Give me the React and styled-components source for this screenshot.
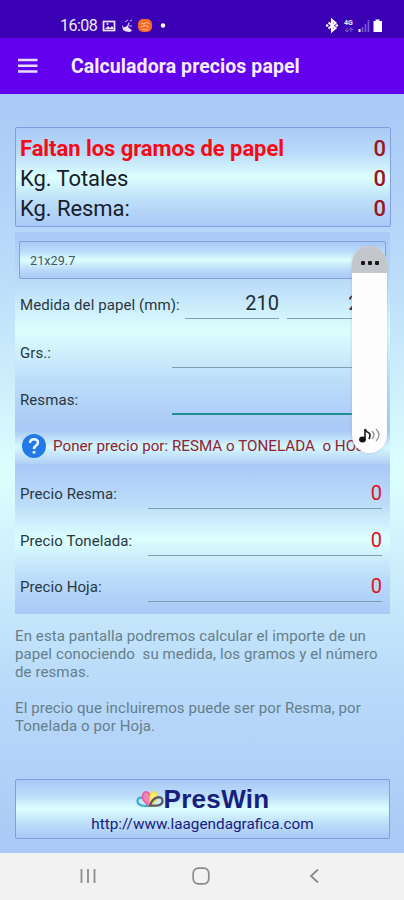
import React from "react";
import styled, { createGlobalStyle } from "styled-components";

const Global = createGlobalStyle`
  *, *::before, *::after { box-sizing: border-box; }
  body { margin: 0; font-family: Roboto, "Liberation Sans", sans-serif; }
`;
const band = "#a9c9f7 0%, #bbdcf9 26%, #dcfffe 50%, #bbdcf9 76%, #a9c9f7 100%";

const Screen = styled.div`
  position: relative;
  width: 404px;
  height: 900px;
  overflow: hidden;
  display: flex;
  flex-direction: column;
`;
const StatusBar = styled.header`
  height: 38px;
  flex: none;
  background: #3b00b3;
  color: #f1eafc;
  display: flex;
  align-items: center;
  padding: 13px 20px 0 60px;
`;
const Clock = styled.span`
  font-size: 16px;
  letter-spacing: -0.5px;
  line-height: 20px;
  width: 42px;
`;
const StatusIcons = styled.svg`
  flex: none;
  margin-left: ${(p) => p.$push || "0"};
`;
const AppBar = styled.div`
  height: 56px;
  flex: none;
  background: #6200ee;
  display: flex;
  align-items: center;
  padding-left: 18px;
  gap: 33px;
`;
const Title = styled.h1`
  margin: 0;
  color: #f5edff;
  font-size: 19.5px;
  font-weight: 700;
  letter-spacing: 0.08px;
  line-height: 26px;
  white-space: nowrap;
  padding-top: 2px;
`;
const Content = styled.main`
  height: 759px;
  flex: none;
  padding: 33px 13px 0 15px;
  background: linear-gradient(#a9c9f7 0%, #b9daf9 22%, #dcfffe 50%, #b9daf9 78%, #a9c9f7 100%);
`;
const Framed = styled.section`
  border: 1px solid #819fdb;
  border-radius: 2px;
  background: linear-gradient(${band});
`;
const Summary = styled(Framed)`
  height: 100px;
  padding: 6px 4px 0;
`;
const SummaryRow = styled.div`
  height: 30px;
  display: flex;
  justify-content: space-between;
  align-items: center;
  font-size: 22px;
  line-height: 30px;
  white-space: nowrap;
  color: ${(p) => (p.$alert ? "#f80a14" : "#17202a")};
  font-weight: ${(p) => (p.$alert ? 700 : 400)};
  letter-spacing: -0.06px;
`;
const Total = styled.span`
  color: #9d1520;
  font-weight: 500;
  letter-spacing: 0;
`;
const Panel = styled.section`
  width: 375px;
  background: linear-gradient(${band});
`;
const FormPanel = styled(Panel)`
  height: 198px;
  margin-top: 5px;
  padding: 9px 4px 0;
`;
const PricePanel = styled(Panel)`
  height: 150px;
  padding: 7px 9px 0 5px;
`;
const Select = styled(Framed)`
  height: 38px;
  padding-left: 10px;
  font-size: 12.6px;
  letter-spacing: 0.05px;
  line-height: 37px;
  color: #46565e;
`;
const Row = styled.div`
  height: ${(p) => p.$height || 47}px;
  display: flex;
  align-items: flex-end;
  padding-left: ${(p) => p.$indent || 0}px;
`;
const Label = styled.label`
  width: ${(p) => p.$width}px;
  flex: none;
  font-size: 15px;
  letter-spacing: 0.08px;
  line-height: 20px;
  color: #29373f;
  white-space: nowrap;
  padding-bottom: ${(p) => p.$lift || 5}px;
  box-sizing: content-box;
`;
const Field = styled.div`
  width: ${(p) => p.$width}px;
  height: 34px;
  flex: none;
  margin-right: ${(p) => p.$gap || 0}px;
  border-bottom: ${(p) => (p.$active ? "2px solid #218f91" : "1px solid #829fac")};
  font-size: 20px;
  line-height: 36px;
  text-align: right;
  color: ${(p) => (p.$price ? "#e2101b" : "#202c34")};
`;
const Help = styled.div`
  height: 34px;
  width: 375px;
  display: flex;
  align-items: center;
  padding: 0 0 2px 7px;
  gap: 7px;
  color: #8e2431;
  font-size: 15.2px;
  white-space: pre;
  background: linear-gradient(#a9c9f7, #d6f8fd 50%, #b1d0f7);
`;
const Notes = styled.div`
  margin-top: 13px;
  height: 108px;
  color: #657e8b;
  font-size: 15px;
  line-height: 18px;
  letter-spacing: 0.1px;
  white-space: pre;
`;
const Footer = styled(Framed)`
  width: 375px;
  height: 60px;
  margin-top: 44px;
  display: flex;
  flex-direction: column;
  align-items: center;
  color: #17217b;
`;
const Brand = styled.div`
  height: 34px;
  display: flex;
  align-items: center;
  font: 700 26px/34px "Liberation Sans", Arial, sans-serif;
  letter-spacing: 0.3px;
  padding-top: 4px;
`;
const Link = styled.span`
  font-size: 15.3px;
  line-height: 20px;
`;
const NavBar = styled.nav`
  height: 47px;
  flex: none;
  background: #f2f2f2;
  display: flex;
  justify-content: space-between;
  align-items: center;
  padding: 0 84px 1px 79px;
`;
const HomeIcon = styled.svg`
  margin-right: 5px;
`;
const VolumePanel = styled.aside`
  position: absolute;
  left: 352px;
  top: 246px;
  width: 35px;
  height: 207px;
  border-radius: 18px;
  overflow: hidden;
  background: #fdfdfe;
  box-shadow: 0 0 3px #8aa5c088;
  display: flex;
  flex-direction: column;
  justify-content: space-between;
`;
const VolumeTop = styled.div`
  height: 27px;
  background: #c3c6ca;
  display: flex;
  justify-content: center;
  align-items: center;
  gap: 3px;
  padding-top: 6px;
`;
const Dot = styled.i`
  width: 4px;
  height: 4px;
  border-radius: 1px;
  background: #171717;
`;

export default function App() {
  return (
    <Screen>
      <Global />
      <StatusBar>
        <Clock>16:08</Clock>
        <StatusIcons width="66" height="18" viewBox="0 0 66 18">
          <rect x="1.5" y="4.5" width="11" height="9" fill="none" stroke="#eee5ff" strokeWidth="1.7" />
          <path d="M3 12l3-3 2 2 2-2 2 3z" fill="#eee5ff" />
          <circle cx="5.5" cy="7" r="1" fill="#eee5ff" />
          <path d="M20 8l2 2.5 3-1.500 2-4 .5 1-1.500 4 4 3.500-2 1.500-4-.5-3-1.500z" fill="#eee5ff" />
          <path d="M23 5l3-2M28 4l2-1M27 9h3" stroke="#cdbcf3" />
          <rect x="36" y="2" width="14" height="13" rx="5" fill="#f56b24" />
          <path d="M39 6l3 1 3-2 2 2M39 10q4-3 8 0M40 12q3 2 6 0" fill="none" stroke="#ffc395" strokeWidth="1" />
          <circle cx="61" cy="8.5" r="2.2" fill="#fff" />
        </StatusIcons>
        <StatusIcons $push="auto" width="60" height="18" viewBox="0 0 60 18">
          <path d="M4.5 5.500l7 5.500L8 14V3l3.500 3L4.500 11.500" fill="none" stroke="#fff" strokeWidth="2.100" />
          <circle cx="3.2" cy="8.5" r="1.3" fill="#fff" />
          <circle cx="12.8" cy="8.5" r="1.3" fill="#fff" />
          <text x="20" y="8" fontSize="7" fontWeight="700" fill="#eee">4G</text>
          <path d="M23 11v4m-2-2 2 2 2-2M27 15v-4m-2 2 2-2 2 2" stroke="#7862c9" fill="none" />
          <path d="M35.5 12v3" stroke="#fff" strokeWidth="2" />
          <path d="M38.5 10v5M41.5 7v8M44.5 3v12" stroke="#7457cc" strokeWidth="1.7" />
          <path d="M49.5 4h2V2.5h4V4h2.5v11h-8.5z" fill="#fff" />
        </StatusIcons>
      </StatusBar>
      <AppBar>
        <svg width="20" height="16" viewBox="0 0 20 16">
          <path d="M0 2h19.5M0 7.800h19.5M0 13.5h19.5" stroke="#e9dbff" strokeWidth="2.5" />
        </svg>
        <Title>Calculadora precios papel</Title>
      </AppBar>
      <Content>
        <Summary>
          <SummaryRow $alert>Faltan los gramos de papel<Total>0</Total></SummaryRow>
          <SummaryRow>Kg. Totales<Total>0</Total></SummaryRow>
          <SummaryRow>Kg. Resma:<Total>0</Total></SummaryRow>
        </Summary>
        <FormPanel>
          <Select>21x29.7</Select>
          <Row $height={40} $indent={1}>
            <Label $width={165} $lift={4}>Medida del papel (mm):</Label>
            <Field $width={94} $gap={8}>210</Field>
            <Field $width={95}>297</Field>
          </Row>
          <Row $height={49} $indent={1}>
            <Label $width={152}>Grs.:</Label>
            <Field $width={210} />
          </Row>
          <Row $height={47} $indent={1}>
            <Label $width={152}>Resmas:</Label>
            <Field $width={210} $active />
          </Row>
        </FormPanel>
        <Help>
          <svg width="24" height="24" viewBox="0 0 24 24">
            <circle cx="12" cy="12" r="12" fill="#2479e8" />
            <path d="M8 9c0-5 8-5 8-.4 0 3-4 3-4 6.3" fill="none" stroke="#eef8ff" strokeWidth="2.5" />
            <circle cx="12" cy="18.3" r="1.5" fill="#eef8ff" />
          </svg>
          Poner precio por: RESMA o TONELADA  o HOJA
        </Help>
        <PricePanel>
          {["Precio Resma:", "Precio Tonelada:", "Precio Hoja:"].map((name, i) => (
            <Row key={name} $height={[38, 47, 46][i]}>
              <Label $width={128}>{name}</Label>
              <Field $width={234} $price>0</Field>
            </Row>
          ))}
        </PricePanel>
        <Notes>{`En esta pantalla podremos calcular el importe de un
papel conociendo  su medida, los gramos y el número
de resmas.

El precio que incluiremos puede ser por Resma, por
Tonelada o por Hoja.`}</Notes>
        <Footer>
          <Brand>
            <svg width="28" height="18" viewBox="0 0 28 18">
              <g fill="none" strokeWidth="2.3">
                <path d="M14 15.5C9 16.5 1.5 16 1.5 11s8-5 12.5 4z" stroke="#38afd8" />
                <path d="M14 16C8 13 5 8 7 4s7-2 7 3z" stroke="#e85aa0" fill="#f184b7" strokeWidth="1.5" />
                <path d="M14 16V7c0-5 5-7 7-3s-2 9-7 12z" stroke="#f2dc4b" fill="#faeb76" strokeWidth="1.5" />
                <path d="M14 15.5C17 6 26.5 5 26.5 11c0 5-7 5-12.5 4.5z" stroke="#595c61" />
              </g>
            </svg>
            PresWin
          </Brand>
          <Link>http://www.laagendagrafica.com</Link>
        </Footer>
      </Content>
      <NavBar>
        <svg width="18" height="16" viewBox="0 0 18 16"><path d="M2.5 1v14M9 1v14M15.5 1v14" stroke="#8b8b8b" strokeWidth="1.8" /></svg>
        <HomeIcon width="18" height="18" viewBox="0 0 18 18"><rect x="1.2" y="1.2" width="15.6" height="15.6" rx="5" fill="none" stroke="#8b8b8b" strokeWidth="1.7" /></HomeIcon>
        <svg width="11" height="16" viewBox="0 0 11 16"><path d="M9 1.5 2 8l7 6.5" fill="none" stroke="#8b8b8b" strokeWidth="1.8" /></svg>
      </NavBar>
      <VolumePanel>
        <VolumeTop><Dot /><Dot /><Dot /></VolumeTop>
        <svg width="35" height="29" viewBox="0 0 35 29">
          <ellipse cx="10.5" cy="15.5" rx="3.4" ry="3" fill="#111" />
          <path d="M13 15V5q1 3 4 4 2 2 0 6" fill="none" stroke="#222" strokeWidth="1.7" />
          <path d="M20 7q4 4 0 8M24 5q6 6 0 12" fill="none" stroke="#8f9499" strokeWidth="1.3" />
        </svg>
      </VolumePanel>
    </Screen>
  );
}
